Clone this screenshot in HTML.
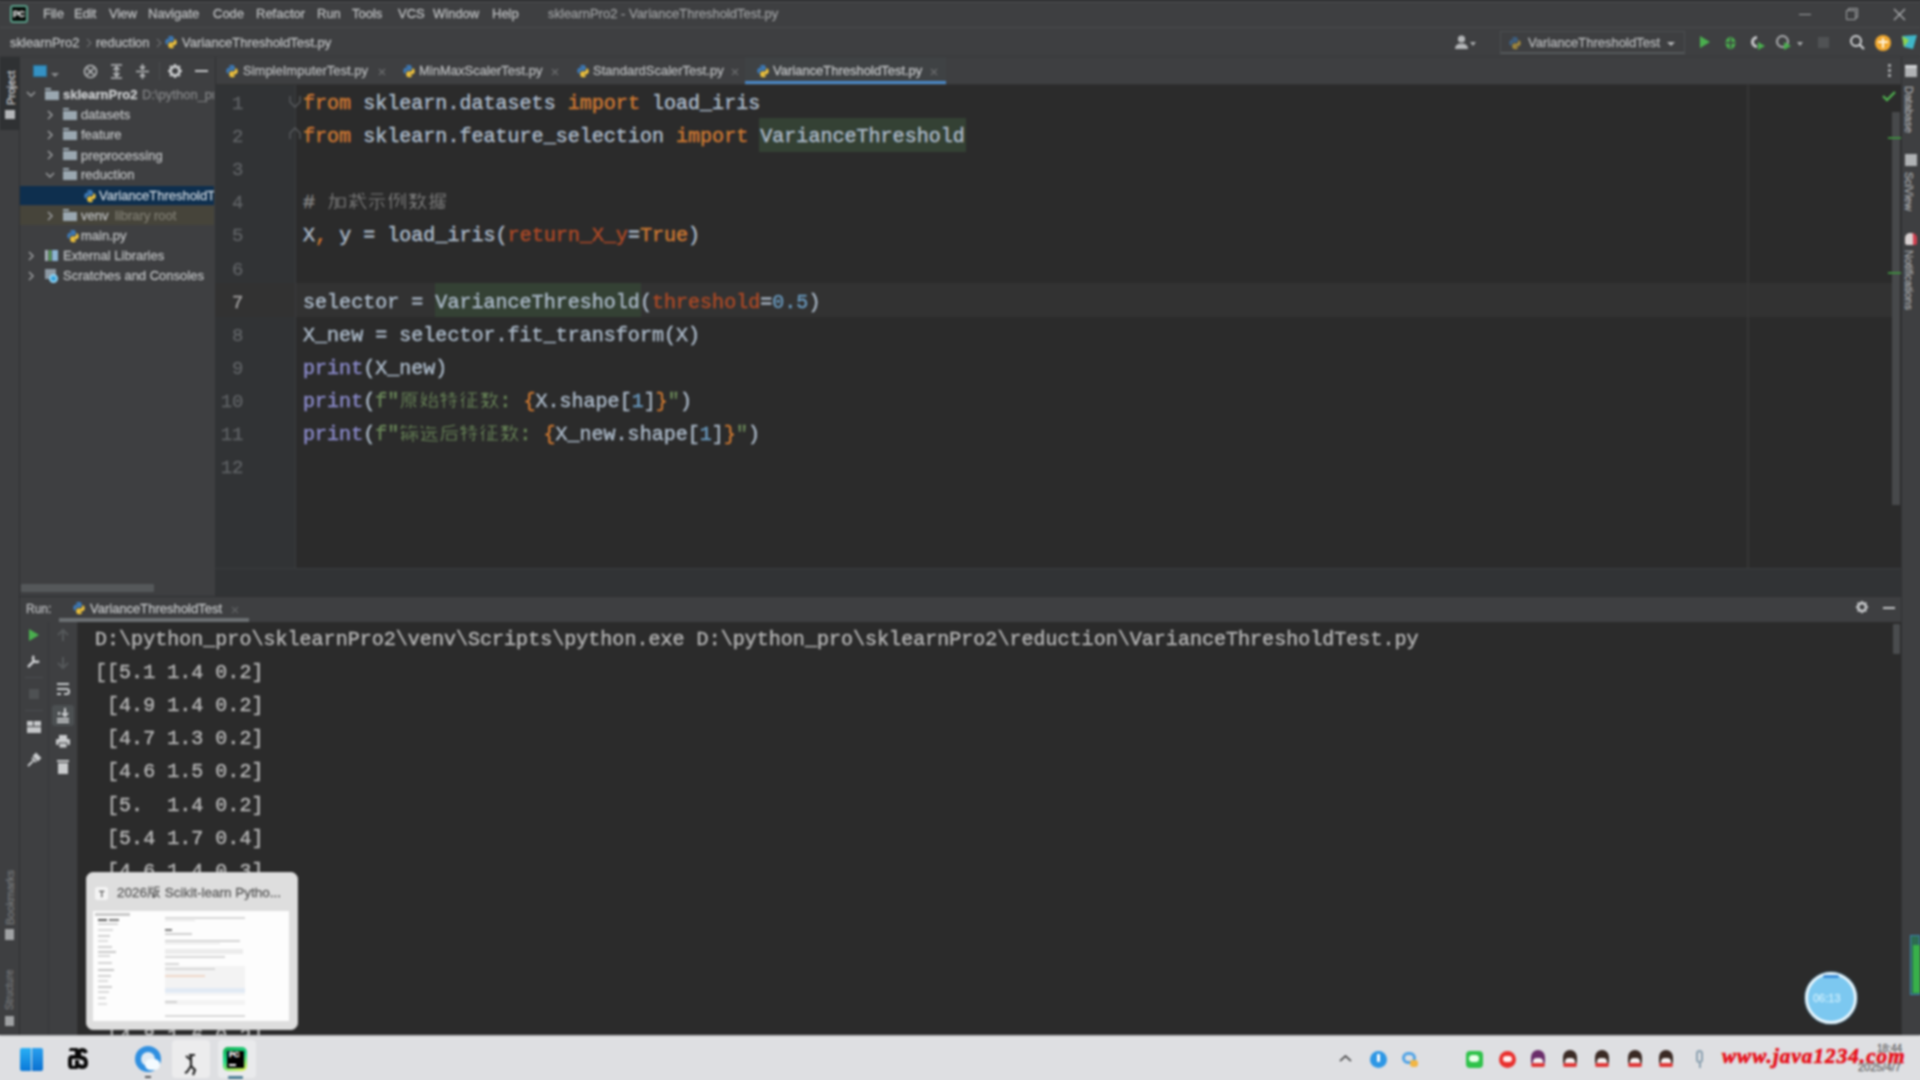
<!DOCTYPE html>
<html><head><meta charset="utf-8">
<style>
*{margin:0;padding:0;box-sizing:border-box}
html,body{width:1920px;height:1080px;overflow:hidden;background:#3e3f41;font-family:"Liberation Sans",sans-serif}
.a{position:absolute}
.t{position:absolute;font-family:"Liberation Sans",sans-serif;font-size:13px;color:#bbbdbf;white-space:nowrap;line-height:16px;-webkit-text-stroke-width:0.3px}
.mono{font-family:"Liberation Mono",monospace;white-space:pre}
#title{left:0;top:0;width:1920px;height:28px;background:#3e3f41;border-top:1px solid #2c2d2f;border-bottom:1px solid #4b4c4e}
#nav{left:0;top:28px;width:1920px;height:29px;background:#3e3f41;border-bottom:1px solid #37383a}
#lstrip{left:0;top:57px;width:20px;height:978px;background:#3e3f41;border-right:1px solid #2f3133}
#rstrip{left:1901px;top:57px;width:19px;height:978px;background:#3e3f41;border-left:1px solid #2f3133}
#proj{left:20px;top:57px;width:195px;height:538px;background:#3e3f41}
#tabs{left:215px;top:57px;width:1686px;height:28px;background:#3e3f41;border-left:1px solid #2f3133;border-bottom:1px solid #323232}
#gutter{left:215px;top:85px;width:81px;height:483px;background:#313335}
#code{left:296px;top:85px;width:1605px;height:483px;background:#2b2b2b}
#hscroll{left:215px;top:568px;width:1686px;height:28px;background:#313335;border-top:1px solid #3a3c3e}
#runhdr{left:20px;top:596px;width:1881px;height:26px;background:#3e3f41;border-top:1px solid #2f3133}
#runtb{left:20px;top:622px;width:58px;height:413px;background:#3e3f41;border-right:1px solid #323232}
#console{left:78px;top:622px;width:1823px;height:413px;background:#2b2b2b}
#taskbar{left:0;top:1035px;width:1920px;height:45px;background:#dedfe2}
.code{position:absolute;font-family:"Liberation Mono",monospace;font-size:20px;white-space:pre;color:#a9b7c6;letter-spacing:0.03px;line-height:24px;-webkit-text-stroke:0.5px}
.ln{position:absolute;font-family:"Liberation Mono",monospace;font-size:19px;color:#606366;white-space:pre;text-align:right;width:40px;line-height:24px;-webkit-text-stroke:0.3px #606366}
.kw{color:#cc7832}.st{color:#6a8759}.nu{color:#6897bb}.pa{color:#aa4926}.bi{color:#8888c6}.cm{color:#808080}
.py{position:absolute;width:14px;height:14px}
#wrap{position:absolute;left:0;top:0;width:1920px;height:1080px;filter:blur(0.8px)}
.cj{display:inline-block;width:20px;height:20px;vertical-align:-3px}
</style></head><body><div id="wrap">
<div class="a" style="left:-12px;top:-12px;width:1944px;height:13px;background:#2c2d2f"></div>
<div class="a" style="left:-12px;top:1079px;width:1944px;height:13px;background:#dedfe2"></div>
<div class="a" style="left:-12px;top:0;width:13px;height:1035px;background:#3e3f41"></div>
<div class="a" style="left:1919px;top:0;width:13px;height:1035px;background:#3e3f41"></div>
<div class="a" style="left:-12px;top:1035px;width:13px;height:45px;background:#dedfe2"></div>
<div class="a" style="left:1919px;top:1035px;width:13px;height:45px;background:#dedfe2"></div>
<svg width="0" height="0" style="position:absolute">
<defs>
<symbol id="pyi" viewBox="0 0 16 16">
<path d="M7.8 1C4.6 1 4.8 2.4 4.8 2.4V4h3.1v.5H3.6S1.5 4.3 1.5 7.6s1.8 3.2 1.8 3.2h1.1V9.2s-.1-1.8 1.8-1.8h3c0 0 1.8 0 1.8-1.7V2.8S11.2 1 7.8 1z" fill="#3d7ab8"/>
<path d="M8.2 15c3.2 0 3-1.4 3-1.4V12H8.1v-.5h4.3s2.1.2 2.1-3.1-1.8-3.2-1.8-3.2h-1.1v1.6s.1 1.8-1.8 1.8h-3s-1.8 0-1.8 1.7v2.9S4.8 15 8.2 15z" fill="#f2c53d"/>
</symbol>
</defs>
</svg>
<div id="title" class="a"></div><div class="a" style="left:0;top:1px;width:1920px;height:2px;background:#444547"></div>
<div id="nav" class="a"></div>
<div id="lstrip" class="a"></div>
<div id="rstrip" class="a"></div>
<div id="proj" class="a"></div>
<div id="tabs" class="a"></div>
<div id="gutter" class="a"></div>
<div id="code" class="a"></div>
<div id="hscroll" class="a"></div>
<div id="runhdr" class="a"></div>
<div id="runtb" class="a"></div>
<div id="console" class="a"></div>
<div id="taskbar" class="a"></div>

<!-- TITLE BAR -->
<div class="a" style="left:10px;top:5px;width:18px;height:18px;background:#050a07;border:2px solid #5b9e89;border-radius:3px"></div>
<div class="t" style="left:13px;top:6px;font-size:9px;font-weight:bold;color:#e0e0e0;letter-spacing:-0.5px">PC</div>
<div class="t" style="left:43px;top:6px">File</div>
<div class="t" style="left:74px;top:6px">Edit</div>
<div class="t" style="left:109px;top:6px">View</div>
<div class="t" style="left:148px;top:6px">Navigate</div>
<div class="t" style="left:213px;top:6px">Code</div>
<div class="t" style="left:256px;top:6px">Refactor</div>
<div class="t" style="left:317px;top:6px">Run</div>
<div class="t" style="left:352px;top:6px">Tools</div>
<div class="t" style="left:398px;top:6px">VCS</div>
<div class="t" style="left:433px;top:6px">Window</div>
<div class="t" style="left:492px;top:6px">Help</div>
<div class="t" style="left:548px;top:6px;color:#9a9c9e">sklearnPro2 - VarianceThresholdTest.py</div>
<div class="a" style="left:1799px;top:14px;width:12px;height:1px;background:#a0a2a4"></div>
<svg class="a" style="left:1845px;top:7px" width="14" height="14" viewBox="0 0 14 14"><path d="M3.5 3.5V1.5H12.5V10.5H10.5M1.5 3.5H10.5V12.5H1.5Z" fill="none" stroke="#a0a2a4" stroke-width="1"/></svg>
<svg class="a" style="left:1893px;top:8px" width="13" height="13" viewBox="0 0 13 13"><path d="M1 1L12 12M12 1L1 12" stroke="#b0b2b4" stroke-width="1.2"/></svg>

<!-- NAV BAR -->
<div class="t" style="left:10px;top:35px">sklearnPro2</div>
<svg class="a" style="left:86px;top:38px" width="6" height="10" viewBox="0 0 6 10"><path d="M1 1L5 5L1 9" fill="none" stroke="#6a6c6e" stroke-width="1.2"/></svg>
<div class="t" style="left:96px;top:35px">reduction</div>
<svg class="a" style="left:156px;top:38px" width="6" height="10" viewBox="0 0 6 10"><path d="M1 1L5 5L1 9" fill="none" stroke="#6a6c6e" stroke-width="1.2"/></svg>
<svg class="py" style="left:164px;top:35px"><use href="#pyi"/></svg>
<div class="t" style="left:182px;top:35px">VarianceThresholdTest.py</div>
<svg width="0" height="0" style="position:absolute"><defs>
<symbol id="g_jia" viewBox="0 0 20 20"><path d="M2 7H9V16Q9 18 7 17M5.5 2Q5.5 13 2 18M11 7H18V16H11Z" fill="none" stroke="currentColor" stroke-width="1.2"/></symbol>
<symbol id="g_zai" viewBox="0 0 20 20"><path d="M2 5H12M7 2V8M3 10H11M5.5 10L3 17M4 14H11M7 11V18M12 2Q13 12 19 18M15 2L17 4M10 7H19" fill="none" stroke="currentColor" stroke-width="1.2"/></symbol>
<symbol id="g_shi" viewBox="0 0 20 20"><path d="M4 3H16M2 8H18M10 8V17Q10 19 8 18M6 11L3 16M14 11L17 16" fill="none" stroke="currentColor" stroke-width="1.2"/></symbol>
<symbol id="g_li" viewBox="0 0 20 20"><path d="M5 2L2 9M4 6V18M7 3H13M9.5 3L7 9M8 7H12L9 16M15 4V14M18 2V18" fill="none" stroke="currentColor" stroke-width="1.2"/></symbol>
<symbol id="g_shu" viewBox="0 0 20 20"><path d="M2 4H10M6 2V9M3 3L9 8M9 3L3 8M2 12H10M5 10L9 18M9 12L3 18M13 2L11 8M12 6H19M17 6Q15 14 11 18M13 10L19 18" fill="none" stroke="currentColor" stroke-width="1.2"/></symbol>
<symbol id="g_ju" viewBox="0 0 20 20"><path d="M2 6H7M5 2V17Q5 18 3 17M2 13L8 10M9 3H18V6H9M9 3V10Q9 16 7 18M10 10H19M14 7V18M11 13H17V17H11Z" fill="none" stroke="currentColor" stroke-width="1.2"/></symbol>
<symbol id="g_yuan" viewBox="0 0 20 20"><path d="M3 3H19M4 3V10Q4 16 2 18M11 4L10 6M7 6H16V12H7ZM7 9H16M11.5 13V18M9 14L7 17M14 14L17 17" fill="none" stroke="currentColor" stroke-width="1.2"/></symbol>
<symbol id="g_shi2" viewBox="0 0 20 20"><path d="M4 2L3 9H8M7 5Q6 14 2 17M2 11L8 16M13 2L11 8H18M16 5L18 8M11 11H18V17H11Z" fill="none" stroke="currentColor" stroke-width="1.2"/></symbol>
<symbol id="g_te" viewBox="0 0 20 20"><path d="M3 3L2 7M2 6H8M5 2V18M2 11L8 9M13 2V7M10 4H16M9 7H18M10 11H18M15 9V17Q15 18 13 17M11 13L12 15" fill="none" stroke="currentColor" stroke-width="1.2"/></symbol>
<symbol id="g_zheng" viewBox="0 0 20 20"><path d="M5 2L2 6M6 6L2 11M4 9V18M9 3H18M13 3V17M13 10H18M10 8V17M8 17H19" fill="none" stroke="currentColor" stroke-width="1.2"/></symbol>
<symbol id="g_shai" viewBox="0 0 20 20"><path d="M4 2L2 6M3 4H8M12 2L10 6M11 4H18M2 10H6M4 8V18M2 15L7 13M8 9V17M10 9H19M11 12V16M11 12H18V16M14 9V19" fill="none" stroke="currentColor" stroke-width="1.2"/></symbol>
<symbol id="g_xuan" viewBox="0 0 20 20"><path d="M2 3L4 5M2 9H5V15L3 17Q10 18 19 18M9 3L8 6M8 5H17M7 9H18M11 9Q11 14 7 15M14 9V14Q14 15 18 15" fill="none" stroke="currentColor" stroke-width="1.2"/></symbol>
<symbol id="g_hou" viewBox="0 0 20 20"><path d="M16 2Q10 4 4 4M4 4V10Q4 15 2 18M4 8H19M8 11H17V17H8Z" fill="none" stroke="currentColor" stroke-width="1.2"/></symbol>
<symbol id="g_ban" viewBox="0 0 20 20"><path d="M3 2V11Q3 16 1 18M3 7H8M7 2V7M3 11H8V18M11 3H18M11 3V10Q11 15 9 18M11 8H17Q15 14 10 18M13 11L18 18" fill="none" stroke="currentColor" stroke-width="1.8"/></symbol>
</defs></svg>
<!-- NAV RIGHT TOOLBAR -->
<svg class="a" style="left:1454px;top:34px" width="15" height="16" viewBox="0 0 15 16"><circle cx="7.5" cy="5" r="3.6" fill="#b4b6b8"/><path d="M1 15Q1 9.5 7.5 9.5Q14 9.5 14 15Z" fill="#b4b6b8"/></svg>
<div class="a" style="left:1470px;top:42px;width:0;height:0;border-left:3.5px solid transparent;border-right:3.5px solid transparent;border-top:4.2px solid #a9abad"></div>
<div class="a" style="left:1500px;top:31px;width:185px;height:23px;border:1px solid #4c4f51;border-bottom:2px solid #55585a;background:#3e3f41"></div>
<svg class="py" style="left:1508px;top:36px;opacity:.55"><use href="#pyi"/></svg>
<div class="t" style="left:1528px;top:35px;font-size:13px;color:#b4b6b8">VarianceThresholdTest</div>
<div class="a" style="left:1667px;top:42px;width:0;height:0;border-left:4.0px solid transparent;border-right:4.0px solid transparent;border-top:4.8px solid #b4b6b8"></div>
<svg class="a" style="left:1698px;top:35px" width="14" height="14" viewBox="0 0 14 14"><path d="M2 1 L12 7 L2 13 Z" fill="#4aae4e"/></svg>
<svg class="a" style="left:1723px;top:35px" width="15" height="15" viewBox="0 0 15 15"><ellipse cx="7.5" cy="8" rx="5" ry="6" fill="#4aae4e"/><rect x="3" y="7" width="9" height="1.5" fill="#3e3f41"/><rect x="6.8" y="3" width="1.5" height="10" fill="#3e3f41"/></svg>
<svg class="a" style="left:1749px;top:34px" width="17" height="17" viewBox="0 0 17 17"><path d="M8 2 A6 6 0 1 0 8 14 L8 11 A3 3 0 1 1 8 5 Z" fill="#c5c7c9"/><path d="M9 8 L16 12 L9 16 Z" fill="#4aae4e"/></svg>
<svg class="a" style="left:1775px;top:34px" width="18" height="17" viewBox="0 0 18 17"><circle cx="7.5" cy="7.5" r="5.5" fill="none" stroke="#a9abad" stroke-width="2"/><path d="M9 8 L16 12 L9 16 Z" fill="#4aae4e"/></svg>
<div class="a" style="left:1797px;top:42px;width:0;height:0;border-left:3.5px solid transparent;border-right:3.5px solid transparent;border-top:4.2px solid #a9abad"></div>
<div class="a" style="left:1818px;top:37px;width:11px;height:11px;background:#505254"></div>
<svg class="a" style="left:1849px;top:34px" width="17" height="17" viewBox="0 0 17 17"><circle cx="7" cy="7" r="5" fill="none" stroke="#d0d2d4" stroke-width="2"/><path d="M10.5 10.5 L15 15" stroke="#d0d2d4" stroke-width="2.2"/></svg>
<div class="a" style="left:1875px;top:35px;width:16px;height:16px;border-radius:8px;background:#f0a830"></div>
<div class="a" style="left:1882px;top:38px;width:2px;height:10px;background:#fff3d8"></div>
<div class="a" style="left:1878px;top:41px;width:10px;height:2px;background:#fff3d8"></div>
<svg class="a" style="left:1901px;top:34px" width="17" height="17" viewBox="0 0 17 17"><path d="M1 2 L16 1 L12 15 L3 13 Z" fill="#3fb6c8"/><path d="M1 2 L8 6 L3 13 Z" fill="#8fd14f"/></svg>

<!-- LEFT STRIP -->
<div class="a" style="left:0;top:57px;width:20px;height:73px;background:#2f3133"></div>
<div class="t" style="left:3px;top:105px;font-size:11px;color:#c5c7c9;transform:rotate(-90deg);transform-origin:0 0">Project</div>
<div class="a" style="left:5px;top:110px;width:10px;height:9px;background:#b5b7b9"></div>
<div class="t" style="left:2px;top:925px;font-size:11px;color:#737577;transform:rotate(-90deg);transform-origin:0 0">Bookmarks</div>
<div class="a" style="left:5px;top:929px;width:9px;height:11px;background:#a0a2a4"></div>
<div class="t" style="left:2px;top:1010px;font-size:10px;color:#737577;transform:rotate(-90deg);transform-origin:0 0">Structure</div>
<div class="a" style="left:5px;top:1016px;width:9px;height:10px;background:#a0a2a4"></div>

<!-- RIGHT STRIP -->
<div class="a" style="left:1905px;top:65px;width:12px;height:12px;background:#b0b2b4;border-top:3px solid #d0d2d4"></div>
<div class="t" style="left:1917px;top:86px;font-size:11px;color:#a3a5a7;transform:rotate(90deg);transform-origin:0 0">Database</div>
<div class="a" style="left:1905px;top:154px;width:12px;height:12px;background:#b0b2b4"></div>
<div class="t" style="left:1917px;top:172px;font-size:11px;color:#a3a5a7;transform:rotate(90deg);transform-origin:0 0">SciView</div>
<div class="a" style="left:1905px;top:233px;width:12px;height:12px;background:#d8d0d0;border-radius:5px 5px 2px 2px;border-right:4px solid #d04050"></div>
<div class="t" style="left:1917px;top:250px;font-size:11px;color:#a3a5a7;transform:rotate(90deg);transform-origin:0 0">Notifications</div>

<!-- PROJECT TOOLBAR -->
<div class="a" style="left:33px;top:65px;width:14px;height:12px;background:#3592c4;border:1px solid #2a6e94"></div>
<div class="a" style="left:51px;top:73px;width:0;height:0;border-left:4.0px solid transparent;border-right:4.0px solid transparent;border-top:4.8px solid #8a8c8e"></div>
<svg class="a" style="left:83px;top:64px" width="15" height="15" viewBox="0 0 15 15"><circle cx="7.5" cy="7.5" r="6" fill="none" stroke="#b9bbbd" stroke-width="1.6"/><path d="M4 4 L11 11 M11 4 L4 11" stroke="#b9bbbd" stroke-width="1.5"/></svg>
<svg class="a" style="left:109px;top:63px" width="15" height="17" viewBox="0 0 15 17"><path d="M2 2 H13 M7.5 4 V13 M4.5 7 L7.5 4 L10.5 7 M4.5 10 L7.5 13 L10.5 10 M2 15 H13" fill="none" stroke="#b9bbbd" stroke-width="1.6"/></svg>
<svg class="a" style="left:135px;top:63px" width="15" height="17" viewBox="0 0 15 17"><path d="M1 8.5 H14 M7.5 1 V5 M5 3.5 L7.5 6 L10 3.5 M7.5 16 V12 M5 13.5 L7.5 11 L10 13.5" fill="none" stroke="#b9bbbd" stroke-width="1.6"/></svg>
<div class="a" style="left:159px;top:62px;width:1px;height:18px;background:#4a4d4f"></div>
<svg class="a" style="left:167px;top:63px" width="16" height="16" viewBox="0 0 16 16"><circle cx="8" cy="8" r="4.5" fill="none" stroke="#c3c5c7" stroke-width="3"/><path d="M8 1V4 M8 12V15 M1 8H4 M12 8H15 M3 3L5 5 M11 11L13 13 M13 3L11 5 M5 11L3 13" stroke="#c3c5c7" stroke-width="2"/></svg>
<div class="a" style="left:195px;top:70px;width:13px;height:2px;background:#c3c5c7"></div>
<!-- PROJECT TREE --><div class="a" style="left:20px;top:85px;width:194px;height:483px;overflow:hidden"><div class="a" style="left:-20px;top:-85px;width:300px;height:600px">
<div class="a" style="left:20px;top:186px;width:195px;height:19px;background:#0e2f4e"></div>
<div class="a" style="left:20px;top:206px;width:195px;height:19px;background:#46443a"></div>
<svg class="a" style="left:26px;top:90px" width="10" height="8" viewBox="0 0 10 8"><path d="M1 2 L5 6 L9 2" fill="none" stroke="#9a9c9e" stroke-width="1.5"/></svg>
<div class="a" style="left:45px;top:89px;width:14px;height:11px;background:#9aa7b0;border-top:2px solid #3e3f41;box-shadow:inset 6px 0 0 0 #9aa7b0"></div>
<div class="a" style="left:45px;top:88px;width:6px;height:2px;background:#9aa7b0"></div>
<div class="t" style="left:63px;top:87px;font-weight:bold;font-size:13px;color:#c8cacc">sklearnPro2</div>
<div class="t" style="left:142px;top:87px;font-size:13px;color:#808284">D:\python_pro</div>


<svg class="a" style="left:46px;top:110px" width="8" height="10" viewBox="0 0 8 10"><path d="M2 1 L6 5 L2 9" fill="none" stroke="#9a9c9e" stroke-width="1.5"/></svg>
<div class="a" style="left:63px;top:109px;width:14px;height:11px;background:#9aa7b0;border-top:2px solid #3e3f41"></div><div class="a" style="left:63px;top:108px;width:6px;height:2px;background:#9aa7b0"></div>
<div class="t" style="left:81px;top:107px;font-size:13px">datasets</div>

<svg class="a" style="left:46px;top:130px" width="8" height="10" viewBox="0 0 8 10"><path d="M2 1 L6 5 L2 9" fill="none" stroke="#9a9c9e" stroke-width="1.5"/></svg>
<div class="a" style="left:63px;top:129px;width:14px;height:11px;background:#9aa7b0;border-top:2px solid #3e3f41"></div><div class="a" style="left:63px;top:128px;width:6px;height:2px;background:#9aa7b0"></div>
<div class="t" style="left:81px;top:127px;font-size:13px">feature</div>

<svg class="a" style="left:46px;top:150px" width="8" height="10" viewBox="0 0 8 10"><path d="M2 1 L6 5 L2 9" fill="none" stroke="#9a9c9e" stroke-width="1.5"/></svg>
<div class="a" style="left:63px;top:149px;width:14px;height:11px;background:#9aa7b0;border-top:2px solid #3e3f41"></div><div class="a" style="left:63px;top:148px;width:6px;height:2px;background:#9aa7b0"></div>
<div class="t" style="left:81px;top:148px;font-size:13px">preprocessing</div>

<svg class="a" style="left:45px;top:171px" width="10" height="8" viewBox="0 0 10 8"><path d="M1 2 L5 6 L9 2" fill="none" stroke="#9a9c9e" stroke-width="1.5"/></svg>
<div class="a" style="left:63px;top:169px;width:14px;height:11px;background:#9aa7b0;border-top:2px solid #3e3f41"></div><div class="a" style="left:63px;top:168px;width:6px;height:2px;background:#9aa7b0"></div>
<div class="t" style="left:81px;top:167px;font-size:13px">reduction</div>

<svg class="py" style="left:83px;top:189px"><use href="#pyi"/></svg>
<div class="t" style="left:99px;top:188px;font-size:13px;color:#c5d0da">VarianceThresholdTest.py</div>
<div class="a" style="left:215px;top:186px;width:30px;height:19px;background:#313335"></div>

<svg class="a" style="left:46px;top:211px" width="8" height="10" viewBox="0 0 8 10"><path d="M2 1 L6 5 L2 9" fill="none" stroke="#9a9c9e" stroke-width="1.5"/></svg>
<div class="a" style="left:63px;top:210px;width:14px;height:11px;background:#9aa7b0;border-top:2px solid #46443a"></div><div class="a" style="left:63px;top:209px;width:6px;height:2px;background:#9aa7b0"></div>
<div class="t" style="left:81px;top:208px;font-size:13px">venv</div>
<div class="t" style="left:115px;top:208px;font-size:13px;color:#7d7b70">library root</div>

<svg class="py" style="left:66px;top:229px"><use href="#pyi"/></svg>
<div class="t" style="left:81px;top:228px;font-size:13px">main.py</div>

<svg class="a" style="left:27px;top:251px" width="8" height="10" viewBox="0 0 8 10"><path d="M2 1 L6 5 L2 9" fill="none" stroke="#9a9c9e" stroke-width="1.5"/></svg>
<div class="a" style="left:45px;top:250px;width:3px;height:11px;background:#a9b4bb"></div><div class="a" style="left:49px;top:250px;width:2px;height:11px;background:#5cae5c"></div><div class="a" style="left:52px;top:250px;width:6px;height:11px;background:#8cb4d2"></div>
<div class="t" style="left:63px;top:248px;font-size:13px">External Libraries</div>

<svg class="a" style="left:27px;top:271px" width="8" height="10" viewBox="0 0 8 10"><path d="M2 1 L6 5 L2 9" fill="none" stroke="#9a9c9e" stroke-width="1.5"/></svg>
<div class="a" style="left:45px;top:269px;width:11px;height:10px;background:#8d99a3"></div><div class="a" style="left:49px;top:274px;width:9px;height:9px;border-radius:5px;background:#38a3dc;border:2px solid #8fd0f0"></div>
<div class="t" style="left:63px;top:268px;font-size:13px">Scratches and Consoles</div>

</div></div>
<!-- project hscroll -->
<div class="a" style="left:20px;top:568px;width:195px;height:27px;background:#3e3f41"></div>
<div class="a" style="left:21px;top:584px;width:133px;height:8px;background:#55585a;border-radius:1px"></div>

<!-- EDITOR TABS -->
<svg class="py" style="left:225px;top:64px"><use href="#pyi"/></svg>
<div class="t" style="left:243px;top:63px;font-size:13px;color:#b5b7b9">SimpleImputerTest.py</div>
<svg class="a" style="left:378px;top:68px" width="8" height="8" viewBox="0 0 8 8"><path d="M1 1L7 7M7 1L1 7" stroke="#6a6c6e" stroke-width="1.2"/></svg>
<svg class="py" style="left:402px;top:64px"><use href="#pyi"/></svg>
<div class="t" style="left:419px;top:63px;font-size:13px;color:#b5b7b9">MinMaxScalerTest.py</div>
<svg class="a" style="left:551px;top:68px" width="8" height="8" viewBox="0 0 8 8"><path d="M1 1L7 7M7 1L1 7" stroke="#6a6c6e" stroke-width="1.2"/></svg>
<svg class="py" style="left:576px;top:64px"><use href="#pyi"/></svg>
<div class="t" style="left:593px;top:63px;font-size:13px;color:#b5b7b9">StandardScalerTest.py</div>
<svg class="a" style="left:731px;top:68px" width="8" height="8" viewBox="0 0 8 8"><path d="M1 1L7 7M7 1L1 7" stroke="#6a6c6e" stroke-width="1.2"/></svg>
<div class="a" style="left:745px;top:57px;width:201px;height:28px;background:#3f4244"></div>
<div class="a" style="left:745px;top:81px;width:201px;height:3px;background:#4a88c7"></div>
<svg class="py" style="left:756px;top:64px"><use href="#pyi"/></svg>
<div class="t" style="left:773px;top:63px;font-size:13px;color:#c0c2c4">VarianceThresholdTest.py</div>
<svg class="a" style="left:930px;top:68px" width="8" height="8" viewBox="0 0 8 8"><path d="M1 1L7 7M7 1L1 7" stroke="#6a6c6e" stroke-width="1.2"/></svg>
<div class="a" style="left:1888px;top:64px;width:3px;height:3px;background:#a0a2a4;box-shadow:0 5px 0 #a0a2a4,0 10px 0 #a0a2a4"></div>
<!-- CODE -->
<div class="a" style="left:215px;top:283px;width:1678px;height:34px;background:#323232"></div>
<div class="a" style="left:759px;top:118px;width:207px;height:34px;background:#344134"></div>
<div class="a" style="left:435px;top:283px;width:206px;height:34px;background:#344134"></div>
<div class="a" style="left:1747px;top:85px;width:2px;height:483px;background:#363636"></div>
<div class="a" style="left:295px;top:85px;width:1px;height:483px;background:#3a3c3e"></div>
<div class="ln" style="left:203.5px;top:92.0px">1</div>
<div class="code" style="left:303px;top:92.0px"><span class="kw">from</span> sklearn.datasets <span class="kw">import</span> load_iris</div>
<div class="ln" style="left:203.5px;top:125.1px">2</div>
<div class="code" style="left:303px;top:125.1px"><span class="kw">from</span> sklearn.feature_selection <span class="kw">import</span> VarianceThreshold</div>
<div class="ln" style="left:203.5px;top:158.2px">3</div>
<div class="ln" style="left:203.5px;top:191.3px">4</div>
<div class="code" style="left:303px;top:191.3px"><span class="cm"># <svg class="cj"><use href="#g_jia"/></svg><svg class="cj"><use href="#g_zai"/></svg><svg class="cj"><use href="#g_shi"/></svg><svg class="cj"><use href="#g_li"/></svg><svg class="cj"><use href="#g_shu"/></svg><svg class="cj"><use href="#g_ju"/></svg></span></div>
<div class="ln" style="left:203.5px;top:224.4px">5</div>
<div class="code" style="left:303px;top:224.4px">X<span class="kw">,</span> y = load_iris(<span class="pa">return_X_y</span>=<span class="kw">True</span>)</div>
<div class="ln" style="left:203.5px;top:257.5px">6</div>
<div class="ln" style="left:203.5px;top:290.6px;color:#a4a3a3;-webkit-text-stroke:0.3px #a4a3a3">7</div>
<div class="code" style="left:303px;top:290.6px">selector = VarianceThreshold(<span class="pa">threshold</span>=<span class="nu">0.5</span>)</div>
<div class="ln" style="left:203.5px;top:323.7px">8</div>
<div class="code" style="left:303px;top:323.7px">X_new = selector.fit_transform(X)</div>
<div class="ln" style="left:203.5px;top:356.8px">9</div>
<div class="code" style="left:303px;top:356.8px"><span class="bi">print</span>(X_new)</div>
<div class="ln" style="left:203.5px;top:389.9px">10</div>
<div class="code" style="left:303px;top:389.9px"><span class="bi">print</span>(<span class="st">f"<svg class="cj"><use href="#g_yuan"/></svg><svg class="cj"><use href="#g_shi2"/></svg><svg class="cj"><use href="#g_te"/></svg><svg class="cj"><use href="#g_zheng"/></svg><svg class="cj"><use href="#g_shu"/></svg>: </span><span class="kw">{</span>X.shape[<span class="nu">1</span>]<span class="kw">}</span><span class="st">"</span>)</div>
<div class="ln" style="left:203.5px;top:423.0px">11</div>
<div class="code" style="left:303px;top:423.0px"><span class="bi">print</span>(<span class="st">f"<svg class="cj"><use href="#g_shai"/></svg><svg class="cj"><use href="#g_xuan"/></svg><svg class="cj"><use href="#g_hou"/></svg><svg class="cj"><use href="#g_te"/></svg><svg class="cj"><use href="#g_zheng"/></svg><svg class="cj"><use href="#g_shu"/></svg>: </span><span class="kw">{</span>X_new.shape[<span class="nu">1</span>]<span class="kw">}</span><span class="st">"</span>)</div>
<div class="ln" style="left:203.5px;top:456.1px">12</div>
<!-- RUN PANEL -->
<div class="t" style="left:26px;top:601px;font-size:12px;color:#b8babc">Run:</div>
<svg class="py" style="left:72px;top:601px"><use href="#pyi"/></svg>
<div class="t" style="left:90px;top:601px;font-size:13px;color:#bfc1c3">VarianceThresholdTest</div>
<svg class="a" style="left:231px;top:606px" width="8" height="8" viewBox="0 0 8 8"><path d="M1 1L7 7M7 1L1 7" stroke="#5f6163" stroke-width="1.2"/></svg>
<div class="a" style="left:59px;top:618px;width:190px;height:4px;background:#6c7073"></div>
<svg class="a" style="left:1855px;top:600px" width="14" height="14" viewBox="0 0 16 16"><circle cx="8" cy="8" r="4.5" fill="none" stroke="#c3c5c7" stroke-width="3"/><path d="M8 1V4M8 12V15M1 8H4M12 8H15M3 3L5 5M11 11L13 13M13 3L11 5M5 11L3 13" stroke="#c3c5c7" stroke-width="2"/></svg>
<div class="a" style="left:1883px;top:607px;width:12px;height:2px;background:#c3c5c7"></div>
<div class="a" style="left:48px;top:622px;width:1px;height:413px;background:#35373a"></div>
<svg class="a" style="left:28px;top:628px" width="12" height="14" viewBox="0 0 12 14"><path d="M1 1L11 7L1 13Z" fill="#4aae4e"/></svg>
<svg class="a" style="left:26px;top:653px" width="16" height="16" viewBox="0 0 16 16"><path d="M2 14L9 7M8 3A3.5 3.5 0 1 0 13 8" fill="none" stroke="#c9cbcd" stroke-width="2.5"/></svg>
<div class="a" style="left:25px;top:677px;width:18px;height:1px;background:#4a4d50"></div>
<div class="a" style="left:29px;top:689px;width:10px;height:10px;background:#4e5153"></div>
<div class="a" style="left:25px;top:710px;width:18px;height:1px;background:#4a4d50"></div>
<div class="a" style="left:27px;top:721px;width:14px;height:12px;background:#c5c7c9;box-shadow:inset 0 -5px 0 0 #c5c7c9,inset 0 6px 0 0 #c5c7c9"></div><div class="a" style="left:27px;top:726px;width:14px;height:1px;background:#3e3f41"></div><div class="a" style="left:33px;top:721px;width:1px;height:5px;background:#3e3f41"></div>
<svg class="a" style="left:26px;top:752px" width="16" height="16" viewBox="0 0 16 16"><path d="M2 14L7 9M6 6L10 10M8 4L12 8L14 6L10 2Z" fill="#c9cbcd" stroke="#c9cbcd" stroke-width="2"/></svg>
<svg class="a" style="left:56px;top:628px" width="14" height="14" viewBox="0 0 14 14"><path d="M7 13V2M2 7L7 2L12 7" fill="none" stroke="#55585a" stroke-width="2"/></svg>
<svg class="a" style="left:56px;top:656px" width="14" height="14" viewBox="0 0 14 14"><path d="M7 1V12M2 7L7 12L12 7" fill="none" stroke="#55585a" stroke-width="2"/></svg>
<svg class="a" style="left:56px;top:682px" width="14" height="16" viewBox="0 0 14 16"><path d="M1 2H13M1 7H11Q13 7 13 9.5Q13 12 11 12H8M1 12H5" fill="none" stroke="#c9cbcd" stroke-width="2"/></svg>
<div class="a" style="left:52px;top:705px;width:22px;height:21px;background:#4c5052;border-radius:3px"></div>
<svg class="a" style="left:56px;top:707px" width="14" height="16" viewBox="0 0 14 16"><path d="M9 1V9M6 6L9 9L12 6M1 12H13M1 15H13M3 5V8" fill="none" stroke="#c9cbcd" stroke-width="2"/></svg>
<svg class="a" style="left:55px;top:734px" width="16" height="15" viewBox="0 0 16 15"><rect x="4" y="1" width="8" height="4" fill="#c9cbcd"/><rect x="1" y="5" width="14" height="6" rx="1" fill="#c9cbcd"/><rect x="4" y="9" width="8" height="5" fill="#c9cbcd" stroke="#3e3f41" stroke-width="1"/></svg>
<svg class="a" style="left:57px;top:759px" width="12" height="16" viewBox="0 0 12 16"><rect x="0" y="1" width="12" height="2" fill="#c9cbcd"/><rect x="1" y="4" width="10" height="11" fill="#c9cbcd"/></svg>
<div class="a" style="left:78px;top:622px;width:1823px;height:413px;overflow:hidden"><div class="a" style="left:-78px;top:-622px;width:1920px;height:1080px">
<div class="code" style="left:95px;top:628.0px;color:#b0b0b0">D:\python_pro\sklearnPro2\venv\Scripts\python.exe D:\python_pro\sklearnPro2\reduction\VarianceThresholdTest.py</div>
<div class="code" style="left:95px;top:661.1px;color:#b0b0b0">[[5.1 1.4 0.2]</div>
<div class="code" style="left:95px;top:694.2px;color:#b0b0b0"> [4.9 1.4 0.2]</div>
<div class="code" style="left:95px;top:727.3px;color:#b0b0b0"> [4.7 1.3 0.2]</div>
<div class="code" style="left:95px;top:760.4px;color:#b0b0b0"> [4.6 1.5 0.2]</div>
<div class="code" style="left:95px;top:793.5px;color:#b0b0b0"> [5.  1.4 0.2]</div>
<div class="code" style="left:95px;top:826.6px;color:#b0b0b0"> [5.4 1.7 0.4]</div>
<div class="code" style="left:95px;top:859.7px;color:#b0b0b0"> [4.6 1.4 0.3]</div>
<div class="code" style="left:95px;top:892.8px;color:#b0b0b0"> [5.  1.5 0.2]</div>
<div class="code" style="left:95px;top:925.9px;color:#b0b0b0"> [4.4 1.4 0.2]</div>
<div class="code" style="left:95px;top:959.0px;color:#b0b0b0"> [4.9 1.5 0.1]</div>
<div class="code" style="left:95px;top:992.1px;color:#b0b0b0"> [5.4 1.5 0.2]</div>
<div class="code" style="left:95px;top:1025.2px;color:#b0b0b0"> [4.8 1.6 0.2]</div>
</div></div>
<div class="a" style="left:1893px;top:624px;width:7px;height:30px;background:#4a4c4e;border-radius:1px"></div>
<!-- EDITOR EXTRAS -->
<svg class="a" style="left:1882px;top:90px" width="14" height="12" viewBox="0 0 14 12"><path d="M1 6L5 10L13 2" fill="none" stroke="#4fae4f" stroke-width="2.4"/></svg>
<div class="a" style="left:1892px;top:112px;width:8px;height:393px;background:#47494b"></div>
<div class="a" style="left:1888px;top:137px;width:13px;height:2px;background:#3f8a3f"></div>
<div class="a" style="left:1888px;top:272px;width:13px;height:2px;background:#3f8a3f"></div>
<!-- fold markers -->
<svg class="a" style="left:289px;top:95px" width="12" height="14" viewBox="0 0 12 14"><path d="M1 1V7L6 12L11 7V1" fill="none" stroke="#5a5d60" stroke-width="1.3"/></svg>
<svg class="a" style="left:289px;top:126px" width="12" height="14" viewBox="0 0 12 14"><path d="M1 13V7L6 2L11 7V13" fill="none" stroke="#5a5d60" stroke-width="1.3"/></svg>

<!-- POPUP -->
<div class="a" style="left:86px;top:872px;width:212px;height:158px;background:#dedede;border-radius:7px;border:1px solid #cfcfcf"></div>
<div class="a" style="left:95px;top:887px;width:13px;height:13px;background:#f4f4f4;border-radius:2px"></div>
<div class="t" style="left:99px;top:886px;font-size:9px;color:#555">T</div>
<div class="t" style="left:117px;top:885px;font-size:13.5px;color:#5c5c5c">2026<svg style="display:inline-block;width:14px;height:14px;vertical-align:-2px"><use href="#g_ban"/></svg> Scikit-learn Pytho...</div>
<div class="a" style="left:93px;top:911px;width:196px;height:110px;background:#fdfdfd"></div>
<div class="a" style="left:95px;top:913px;width:35px;height:3px;background:#c9c9c9"></div>
<div class="a" style="left:98px;top:919px;width:9px;height:2px;background:#555"></div>
<div class="a" style="left:98px;top:923px;width:20px;height:2px;background:#d6d6d6"></div>
<div class="a" style="left:98px;top:929px;width:15px;height:2px;background:#dadada"></div>
<div class="a" style="left:98px;top:935px;width:12px;height:2px;background:#cfcfcf"></div>
<div class="a" style="left:98px;top:940px;width:10px;height:2px;background:#dcdcdc"></div>
<div class="a" style="left:98px;top:946px;width:14px;height:2px;background:#d0d0d0"></div>
<div class="a" style="left:98px;top:951px;width:18px;height:2px;background:#c8c8c8"></div>
<div class="a" style="left:98px;top:955px;width:12px;height:2px;background:#d8d8d8"></div>
<div class="a" style="left:98px;top:962px;width:14px;height:2px;background:#d4d4d4"></div>
<div class="a" style="left:98px;top:969px;width:16px;height:2px;background:#c6c6c6"></div>
<div class="a" style="left:98px;top:975px;width:13px;height:2px;background:#d0d0d0"></div>
<div class="a" style="left:98px;top:980px;width:10px;height:2px;background:#dadada"></div>
<div class="a" style="left:98px;top:986px;width:14px;height:2px;background:#cdcdcd"></div>
<div class="a" style="left:98px;top:991px;width:11px;height:2px;background:#d8d8d8"></div>
<div class="a" style="left:98px;top:997px;width:8px;height:2px;background:#d6d6d6"></div>
<div class="a" style="left:98px;top:1003px;width:9px;height:2px;background:#dedede"></div>
<div class="a" style="left:109px;top:919px;width:10px;height:2px;background:#777"></div>
<div class="a" style="left:165px;top:917px;width:80px;height:2px;background:#d8d8d8"></div>
<div class="a" style="left:165px;top:920px;width:30px;height:1px;background:#e0e0e0"></div>
<div class="a" style="left:165px;top:929px;width:7px;height:2px;background:#777"></div>
<div class="a" style="left:165px;top:933px;width:27px;height:2px;background:#cfcfcf"></div>
<div class="a" style="left:165px;top:940px;width:75px;height:2px;background:#d4d4d4"></div>
<div class="a" style="left:165px;top:943px;width:55px;height:1px;background:#e2e2e2"></div>
<div class="a" style="left:165px;top:949px;width:78px;height:5px;background:#ececec"></div>
<div class="a" style="left:165px;top:956px;width:60px;height:2px;background:#d8d8d8"></div>
<div class="a" style="left:165px;top:963px;width:14px;height:2px;background:#d6d6d6"></div>
<div class="a" style="left:165px;top:966px;width:80px;height:22px;background:#f3f3f3"></div>
<div class="a" style="left:165px;top:968px;width:50px;height:2px;background:#d8d8d8"></div>
<div class="a" style="left:165px;top:975px;width:40px;height:2px;background:#f0d8c8"></div>
<div class="a" style="left:165px;top:988px;width:80px;height:5px;background:#e2eaf4"></div>
<div class="a" style="left:165px;top:994px;width:80px;height:1px;background:#eeeeee"></div>
<div class="a" style="left:165px;top:1000px;width:80px;height:5px;background:#f3f3f3"></div>
<div class="a" style="left:165px;top:1001px;width:12px;height:2px;background:#d0d0d0"></div>
<div class="a" style="left:165px;top:1015px;width:80px;height:2px;background:#d8d8d8"></div>

<!-- FLOATING WIDGET -->
<div class="a" style="left:1805px;top:972px;width:52px;height:52px;border-radius:26px;background:#7cc8f0;border:3px solid #e6f4fb;box-shadow:0 0 2px #4aa0d0"></div>
<div class="a" style="left:1823px;top:975px;width:16px;height:3px;background:#3d8fd8;border-radius:2px"></div>
<div class="t" style="left:1813px;top:990px;font-size:11px;color:#c8ecfc">06:13</div>
<div class="a" style="left:1910px;top:935px;width:10px;height:60px;background:#2d6b52;border:1px solid #3a86b0"></div>
<div class="a" style="left:1913px;top:945px;width:7px;height:48px;background:#38b04a"></div>

<!-- TASKBAR -->
<div class="a" style="left:0;top:1035px;width:1920px;height:2px;background:#c9cacc"></div><div class="a" style="left:0;top:1037px;width:1920px;height:2px;background:#e4e4e5"></div>
<div class="a" style="left:20px;top:1048px;width:11px;height:23px;background:linear-gradient(180deg,#2ab0f5,#0a78d8);border-radius:2px 0 0 2px"></div>
<div class="a" style="left:32px;top:1048px;width:11px;height:23px;background:linear-gradient(180deg,#2aa0ee,#0a70d0);border-radius:0 2px 2px 0"></div>
<svg class="a" style="left:67px;top:1048px" width="22" height="21" viewBox="0 0 22 21"><path d="M4 3Q4 1 7 1Q10 1 10 4V9H5Q3 9 3 12V17Q3 20 7 20Q10 20 10 17V12" fill="none" stroke="#0a0a0a" stroke-width="4"/><path d="M19 5Q18 2 15 2Q12 2 12 6Q12 10 16 10Q19 11 19 15Q19 19 15 19Q12 19 12 16" fill="none" stroke="#0a0a0a" stroke-width="4"/></svg>
<div class="a" style="left:135px;top:1046px;width:26px;height:26px;border-radius:13px;border:6px solid #2f8fe0;background:#dfeaf3"></div>
<div class="a" style="left:145px;top:1059px;width:15px;height:11px;border-radius:6px;background:#f4fbff"></div>
<div class="a" style="left:145px;top:1076px;width:6px;height:2px;background:#555"></div>
<div class="a" style="left:172px;top:1040px;width:38px;height:38px;background:#ececed;border-radius:4px"></div>
<svg class="a" style="left:182px;top:1053px" width="18" height="24" viewBox="0 0 18 24"><path d="M4 3L9 7V13M9 3V6M13 2H7M9 13L5 19L3 20M9 13L13 17L11 22" fill="none" stroke="#222" stroke-width="2.2"/></svg>
<div class="a" style="left:218px;top:1040px;width:38px;height:38px;background:#e9eaec;border-radius:4px"></div>
<div class="a" style="left:223px;top:1047px;width:24px;height:24px;border-radius:5px;background:linear-gradient(160deg,#0fae4a 0%,#21d789 45%,#e8f04a 100%)"></div>
<div class="a" style="left:227px;top:1051px;width:17px;height:17px;background:#000"></div>
<div class="t" style="left:229px;top:1050px;font-size:8px;font-weight:bold;color:#fff;line-height:10px;letter-spacing:-0.5px">PC</div>
<div class="a" style="left:229px;top:1064px;width:7px;height:2px;background:#fff"></div>
<div class="a" style="left:228px;top:1076px;width:15px;height:3px;background:#4d7f95;border-radius:1px"></div>

<svg class="a" style="left:1339px;top:1054px" width="13" height="8" viewBox="0 0 13 8"><path d="M1 7L6.5 2L12 7" fill="none" stroke="#333" stroke-width="1.6"/></svg>
<div class="a" style="left:1370px;top:1051px;width:17px;height:17px;border-radius:9px;background:#2d97e5"></div>
<div class="a" style="left:1377px;top:1054px;width:3px;height:8px;background:#fff;border-radius:1px"></div>
<div class="a" style="left:1402px;top:1052px;width:14px;height:12px;border-radius:7px;border:3px solid #4fa3e6"></div>
<div class="a" style="left:1410px;top:1060px;width:8px;height:7px;border-radius:3px;background:#f2b644"></div>
<div class="a" style="left:1466px;top:1051px;width:17px;height:17px;border-radius:4px;background:#2fc24a"></div>
<div class="a" style="left:1469px;top:1055px;width:10px;height:7px;border-radius:4px;background:#eaffea"></div>
<div class="a" style="left:1499px;top:1051px;width:17px;height:17px;border-radius:9px;background:#e9302e"></div>
<div class="a" style="left:1503px;top:1056px;width:9px;height:6px;border-radius:3px;background:#fff0f0"></div>
<div class="a" style="left:1531px;top:1050px;width:14px;height:17px;border-radius:7px 7px 6px 6px;background:#6a2d6a"></div>
<div class="a" style="left:1533px;top:1058px;width:10px;height:8px;border-radius:5px;background:#f4f0f0"></div>
<div class="a" style="left:1531px;top:1063px;width:14px;height:4px;border-radius:2px;background:#e03838"></div>
<div class="a" style="left:1563px;top:1050px;width:14px;height:17px;border-radius:7px 7px 6px 6px;background:#3a2a24"></div>
<div class="a" style="left:1565px;top:1058px;width:10px;height:8px;border-radius:5px;background:#f4f0f0"></div>
<div class="a" style="left:1563px;top:1063px;width:14px;height:4px;border-radius:2px;background:#e03838"></div>
<div class="a" style="left:1595px;top:1050px;width:14px;height:17px;border-radius:7px 7px 6px 6px;background:#3a2a24"></div>
<div class="a" style="left:1597px;top:1058px;width:10px;height:8px;border-radius:5px;background:#f4f0f0"></div>
<div class="a" style="left:1595px;top:1063px;width:14px;height:4px;border-radius:2px;background:#e03838"></div>
<div class="a" style="left:1628px;top:1050px;width:14px;height:17px;border-radius:7px 7px 6px 6px;background:#3a2a24"></div>
<div class="a" style="left:1630px;top:1058px;width:10px;height:8px;border-radius:5px;background:#f4f0f0"></div>
<div class="a" style="left:1628px;top:1063px;width:14px;height:4px;border-radius:2px;background:#e03838"></div>
<div class="a" style="left:1659px;top:1050px;width:14px;height:17px;border-radius:7px 7px 6px 6px;background:#3a2a24"></div>
<div class="a" style="left:1661px;top:1058px;width:10px;height:8px;border-radius:5px;background:#f4f0f0"></div>
<div class="a" style="left:1659px;top:1063px;width:14px;height:4px;border-radius:2px;background:#e03838"></div>
<div class="a" style="left:1696px;top:1050px;width:7px;height:13px;border-radius:4px;border:2px solid #8aa0b0"></div>
<div class="a" style="left:1699px;top:1063px;width:2px;height:5px;background:#8aa0b0"></div>
<div class="t" style="left:1877px;top:1043px;font-size:10px;color:#6a6a6a;line-height:12px">18:44</div>
<div class="t" style="left:1858px;top:1061px;font-size:11px;color:#6a6a6a;line-height:12px">2025/4/7</div>
<div class="a" style="left:1437px;top:1058px;width:0;height:0"></div>
<div class="t" style="left:1722px;top:1044px;font-family:'Liberation Serif',serif;font-size:21px;font-weight:bold;font-style:italic;color:#e8101a;line-height:24px;letter-spacing:1.1px;-webkit-text-stroke:0.7px #e8101a">www.java1234.com</div>
</body></html>
